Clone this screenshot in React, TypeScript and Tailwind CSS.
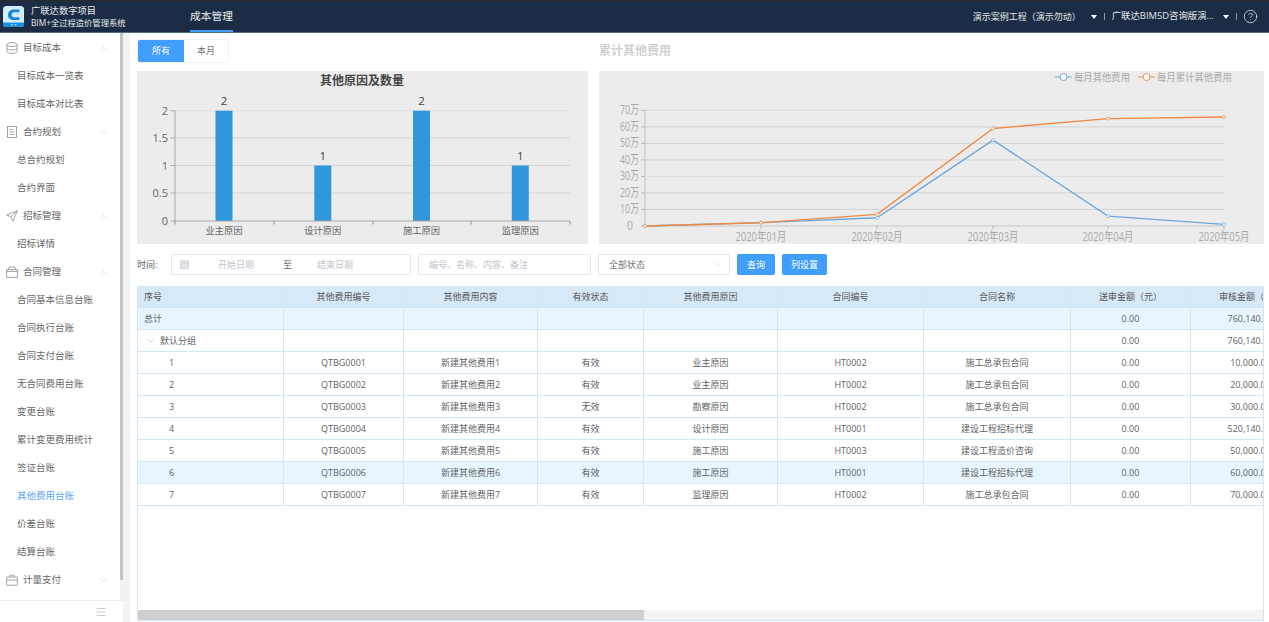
import { ChevronDown, ChevronUp, CircleHelp, Menu } from 'lucide-react';

const FONT = '"Open Sans","Noto Sans CJK SC","Noto Sans",sans-serif';

type NavItem = { label: string; icon?: string; open?: boolean; active?: boolean };

const navItems: NavItem[] = [
  { label: '目标成本', icon: 'db', open: true },
  { label: '目标成本一览表' },
  { label: '目标成本对比表' },
  { label: '合约规划', icon: 'doc', open: true },
  { label: '总合约规划' },
  { label: '合约界面' },
  { label: '招标管理', icon: 'send', open: true },
  { label: '招标详情' },
  { label: '合同管理', icon: 'box', open: true },
  { label: '合同基本信息台账' },
  { label: '合同执行台账' },
  { label: '合同支付台账' },
  { label: '无合同费用台账' },
  { label: '变更台账' },
  { label: '累计变更费用统计' },
  { label: '签证台账' },
  { label: '其他费用台账', active: true },
  { label: '价差台账' },
  { label: '结算台账' },
  { label: '计量支付', icon: 'case', open: false },
];

const columns = [
  { title: '序号', width: 146 },
  { title: '其他费用编号', width: 120 },
  { title: '其他费用内容', width: 134 },
  { title: '有效状态', width: 106 },
  { title: '其他费用原因', width: 134 },
  { title: '合同编号', width: 146 },
  { title: '合同名称', width: 147 },
  { title: '送审金额（元）', width: 120 },
  { title: '审核金额（元）', width: 120 },
];

const rows = [
  ['1', 'QTBG0001', '新建其他费用1', '有效', '业主原因', 'HT0002', '施工总承包合同', '0.00', '10,000.00'],
  ['2', 'QTBG0002', '新建其他费用2', '有效', '业主原因', 'HT0002', '施工总承包合同', '0.00', '20,000.00'],
  ['3', 'QTBG0003', '新建其他费用3', '无效', '勘察原因', 'HT0002', '施工总承包合同', '0.00', '30,000.00'],
  ['4', 'QTBG0004', '新建其他费用4', '有效', '设计原因', 'HT0001', '建设工程招标代理', '0.00', '520,140.00'],
  ['5', 'QTBG0005', '新建其他费用5', '有效', '施工原因', 'HT0003', '建设工程造价咨询', '0.00', '50,000.00'],
  ['6', 'QTBG0006', '新建其他费用6', '有效', '施工原因', 'HT0001', '建设工程招标代理', '0.00', '60,000.00'],
  ['7', 'QTBG0007', '新建其他费用7', '有效', '监理原因', 'HT0002', '施工总承包合同', '0.00', '70,000.00'],
];

function NavIcon({ name }: { name: string }) {
  const common = { width: 12, height: 12, viewBox: '0 0 12 12', fill: 'none', stroke: '#9a9a9a', strokeWidth: 0.9 };
  if (name === 'db') {
    return (
      <svg {...common}>
        <ellipse cx="6" cy="2.6" rx="5" ry="2" />
        <path d="M1 2.6v6.8c0 1.1 2.2 2 5 2s5-.9 5-2V2.6M1 6c0 1.1 2.2 2 5 2s5-.9 5-2" />
      </svg>
    );
  }
  if (name === 'doc') {
    return (
      <svg {...common}>
        <rect x="1.5" y="0.5" width="9" height="11" />
        <path d="M3.5 3.5h3M3.5 6h5M3.5 8.5h5" />
      </svg>
    );
  }
  if (name === 'send') {
    return (
      <svg {...common}>
        <path d="M11.3.7.7 5l4.2 1.9 2 4.4zM4.9 6.9 11.3.7" />
      </svg>
    );
  }
  if (name === 'box') {
    return (
      <svg {...common}>
        <rect x="0.6" y="3.6" width="10.8" height="7.8" />
        <path d="M2.4 3.6 3 1h6l.6 2.6M.6 5.4h10.8" />
      </svg>
    );
  }
  return (
    <svg {...common}>
      <rect x="0.6" y="3" width="10.8" height="8.2" rx="0.5" />
      <path d="M4 3V1.2h4V3M.6 6h10.8" />
    </svg>
  );
}

function Sidebar() {
  return (
    <aside className="flex h-full w-[123px] shrink-0 flex-col bg-white">
      <div className="flex min-h-0 flex-1">
        <div className="w-[120px] overflow-hidden pt-px">
          {navItems.map(item =>
            item.icon ? (
              <div key={item.label} className="flex h-[28px] items-center pl-[6px] pr-[11px] text-[#666]">
                <NavIcon name={item.icon} />
                <span className="ml-[5px] flex-1 text-[9.5px]">{item.label}</span>
                {item.open ? (
                  <ChevronUp size={11} strokeWidth={1} color="#bbb" />
                ) : (
                  <ChevronDown size={11} strokeWidth={1} color="#bbb" />
                )}
              </div>
            ) : (
              <div
                key={item.label}
                className={`flex h-[28px] items-center pl-[17px] text-[9.5px] ${item.active ? 'text-[#5ba4f7]' : 'text-[#666]'}`}
              >
                {item.label}
              </div>
            ),
          )}
        </div>
        <div className="w-[3px] bg-[#f1f1f1]">
          <div className="h-[547px] bg-[#c4c4c4]" />
        </div>
      </div>
      <div className="flex h-[22px] items-center justify-end border-t border-[#eeeeee] pr-[16px]">
        <Menu size={12} strokeWidth={1} color="#999" />
      </div>
    </aside>
  );
}

function Header() {
  return (
    <header className="flex h-[33px] shrink-0 items-center border-t border-[#2b2b2b] border-b border-b-[#5c6b7e] bg-[#1b2c44] text-white">
      <svg width="21" height="21" viewBox="0 0 21 21" className="ml-[3px]">
        <rect width="21" height="21" rx="3.500" fill="#d3effb" />
        <path d="M0 16.500h21V18a3 3 0 0 1-3 3H3a3 3 0 0 1-3-3z" fill="#1a8fe0" />
        <path d="M16.500 3.500H10.500C7.500 3.500 5 5.800 5 9s2.500 5 5.500 5h6v-2.800h-5.500c-1.400 0-2.300-.9-2.300-2.200s.9-2.700 2.300-2.700h5.500z" fill="#1a86d8" />
        <path d="M8 18.800h2M11.500 18.800h2" stroke="#cdeaf8" strokeWidth="1" />
      </svg>
      <div className="ml-[7px] w-[159px] leading-[12px]">
        <div className="text-[9.3px] text-[#e8ebef]">广联达数字项目</div>
        <div className="text-[8.3px] text-[#e8ebef]">BIM+全过程造价管理系统</div>
      </div>
      <div className="flex h-full w-[43px] items-center justify-center border-b-2 border-[#409eff] pt-[2px] text-[10.7px] text-[#eef1f4]">
        成本管理
      </div>
      <div className="ml-auto flex items-center pr-[11px] text-[9.4px] text-[#e4e7eb]">
        <span className="text-[9px]">演示案例工程（演示勿动）</span>
        <span className="ml-[10px] h-0 w-0 border-x-[3px] border-t-[4px] border-x-transparent border-t-white" />
        <span className="ml-[7px] h-[7px] w-px bg-[#8a96a5]" />
        <span className="ml-[7px]">广联达BIM5D咨询版演...</span>
        <span className="ml-[9px] h-0 w-0 border-x-[3px] border-t-[4px] border-x-transparent border-t-white" />
        <span className="ml-[7px] h-[7px] w-px bg-[#8a96a5]" />
        <CircleHelp size={15} strokeWidth={1.2} className="ml-[6px]" />
      </div>
    </header>
  );
}

function BarChart() {
  const gridY = [110.7, 138, 165.5, 193, 221];
  const labels = ['2', '1.5', '1', '0.5', '0'];
  const ticks = [175, 274, 373, 471, 570];
  const bars = [
    { x: 215.5, value: 2, name: '业主原因' },
    { x: 314.3, value: 1, name: '设计原因' },
    { x: 413, value: 2, name: '施工原因' },
    { x: 511.800, value: 1, name: '监理原因' },
  ];
  return (
    <svg width="451" height="173" viewBox="137 71 451 173" className="bg-[#ececec]" style={{ fontFamily: FONT }}>
      <text x="362" y="85" textAnchor="middle" fontSize="12" fontWeight="700" fill="#444">其他原因及数量</text>
      {gridY.map((y, i) => (
        <g key={y}>
          {i < 4 && <line x1="175" x2="570" y1={y} y2={y} stroke={i === 0 ? '#dadada' : '#cfcfcf'} strokeWidth="0.8" />}
          <line x1="170.500" x2="175" y1={y} y2={y} stroke="#999" strokeWidth="0.8" />
          <text x="168" y={y + 4} textAnchor="end" fontSize="11" fill="#666">{labels[i]}</text>
        </g>
      ))}
      <line x1="175" x2="175" y1="110.700" y2="221" stroke="#a8a8a8" strokeWidth="1" />
      {bars.map(bar => {
        const top = bar.value === 2 ? 110.7 : 165.5;
        return (
          <g key={bar.name}>
            <rect x={bar.x} y={top} width="17" height={221 - top} fill="#3097dc" />
            <text x={bar.x + 8.500} y={top - 5.500} textAnchor="middle" fontSize="11.500" fill="#444">{bar.value}</text>
            <text x={bar.x + 8.500} y="233.500" textAnchor="middle" fontSize="9.300" fill="#666">{bar.name}</text>
          </g>
        );
      })}
      <line x1="175" x2="570" y1="221" y2="221" stroke="#a8a8a8" strokeWidth="1.200" />
      {ticks.map(x => (
        <line key={x} x1={x} x2={x} y1="221" y2="224.500" stroke="#777" strokeWidth="0.8" />
      ))}
    </svg>
  );
}

function LineChart() {
  const xs = [645, 761, 877, 993, 1108, 1224];
  const toY = (v: number) => 226 - v * 1.652;
  const monthly = [0, 2, 5, 52, 6, 1];
  const total = [0, 2, 7, 59, 65, 66];
  const toPoints = (data: number[]) => data.map((v, i) => `${xs[i]},${toY(v)}`).join(' ');
  const yLabels = ['0', '10万', '20万', '30万', '40万', '50万', '60万', '70万'];
  const months = ['2020年01月', '2020年02月', '2020年03月', '2020年04月', '2020年05月'];
  return (
    <svg width="665" height="173" viewBox="599 71 665 173" className="bg-[#ececec]" style={{ fontFamily: FONT }}>
      <line x1="1055" x2="1072" y1="77" y2="77" stroke="#6ea6dc" strokeWidth="1" />
      <circle cx="1063.500" cy="77" r="3.500" fill="#fff" stroke="#6ea6dc" />
      <text x="1074" y="80.500" fontSize="10" fill="#aaa" textLength="56" lengthAdjust="spacingAndGlyphs">每月其他费用</text>
      <line x1="1138" x2="1155" y1="77" y2="77" stroke="#f0924f" strokeWidth="1" />
      <circle cx="1146.500" cy="77" r="3.500" fill="#fff" stroke="#f0924f" />
      <text x="1157" y="80.500" fontSize="10" fill="#aaa" textLength="75" lengthAdjust="spacingAndGlyphs">每月累计其他费用</text>
      {yLabels.map((label, i) => {
        const y = 226 - i * 16.52;
        return (
          <g key={label}>
            {i > 0 && <line x1="645" x2="1224" y1={y} y2={y} stroke={i === 7 || i === 3 ? '#dcdcdc' : '#cfcfcf'} strokeWidth="0.9" />}
            <line x1="641" x2="645" y1={y} y2={y} stroke="#aaa" strokeWidth="0.8" />
            <text
              x={i === 0 ? 633 : 639}
              y={y + 4}
              textAnchor="end"
              fontSize="12"
              fill="#aaa"
              textLength={i === 0 ? 6 : 19}
              lengthAdjust="spacingAndGlyphs"
            >
              {label}
            </text>
          </g>
        );
      })}
      <line x1="645" x2="645" y1="110" y2="226" stroke="#bbb" strokeWidth="0.9" />
      <line x1="645" x2="1224" y1="226" y2="226" stroke="#c8c8c8" strokeWidth="1.200" />
      {xs.map(x => (
        <line key={x} x1={x} x2={x} y1="226" y2="229" stroke="#aaa" strokeWidth="0.8" />
      ))}
      {months.map((label, i) => (
        <text key={label} x={xs[i + 1] - 25.500} y="240.500" fontSize="12" fill="#aaa" textLength="51" lengthAdjust="spacingAndGlyphs">
          {label}
        </text>
      ))}
      <polyline points={toPoints(monthly)} fill="none" stroke="#6ea6dc" strokeWidth="1.300" />
      <polyline points={toPoints(total)} fill="none" stroke="#ef8a45" strokeWidth="1.400" />
      {monthly.map((v, i) => (
        <circle key={i} cx={xs[i]} cy={toY(v)} r="1.500" fill="#fff" stroke="#6ea6dc" strokeWidth="0.7" />
      ))}
      {total.map((v, i) => (
        <circle key={i} cx={xs[i]} cy={toY(v)} r="1.500" fill="#fff" stroke="#ef8a45" strokeWidth="0.7" />
      ))}
    </svg>
  );
}

function Filters() {
  return (
    <div className="flex h-[21px] shrink-0 items-center text-[9px] text-[#c0c4cc]">
      <span className="w-[34px] text-[#606266]">时间:</span>
      <div className="flex h-full w-[240px] items-center rounded-[2px] border border-[#e4e7ed] pl-[8px]">
        <svg width="9" height="9" viewBox="0 0 9 9" fill="#e3e6ec" stroke="#c6cad2" strokeWidth="0.7">
          <rect x="0.5" y="0.8" width="8" height="7.700" />
          <path d="M.5 3h8" />
        </svg>
        <span className="ml-[29px] w-[65px]">开始日期</span>
        <span className="text-[#606266]">至</span>
        <span className="ml-[25px]">结束日期</span>
      </div>
      <div className="ml-[7px] flex h-full w-[173px] items-center rounded-[2px] border border-[#e4e7ed] pl-[10px]">
        编号、名称、内容、备注
      </div>
      <div className="ml-[7px] flex h-full w-[132px] items-center justify-between rounded-[2px] border border-[#e4e7ed] pl-[10px] pr-[6px] text-[#777]">
        全部状态
        <ChevronDown size={11} strokeWidth={1} color="#c0c4cc" />
      </div>
      <button className="ml-[7px] h-full w-[38px] rounded-[2px] bg-[#409eff] text-[9px] text-white">查询</button>
      <button className="ml-[7px] h-full w-[45px] rounded-[2px] bg-[#409eff] text-[9px] text-white">列设置</button>
    </div>
  );
}

function DataTable() {
  const cell = 'h-[22px] border-r border-b border-[#d3e6f5] p-0 text-center font-normal';
  return (
    <div className="relative mt-[11px] min-h-0 flex-1 overflow-hidden border-x border-b border-[#d3e6f5] text-[9px] text-[#606266]">
      <table className="w-[1173px] table-fixed border-separate border-spacing-0">
        <colgroup>
          {columns.map(col => (
            <col key={col.title} style={{ width: col.width }} />
          ))}
        </colgroup>
        <thead>
          <tr className="bg-[#d6e9f8] text-[#555]">
            {columns.map((col, i) => (
              <th key={col.title} className={`${cell} border-t font-medium ${i === 0 ? 'pl-[6px] text-left' : ''}`}>
                {col.title}
              </th>
            ))}
          </tr>
        </thead>
        <tbody>
          <tr className="bg-[#e8f5fe]">
            <td className={`${cell} pl-[6px] text-left`}>总计</td>
            {columns.slice(1, 7).map(col => (
              <td key={col.title} className={cell} />
            ))}
            <td className={cell}>0.00</td>
            <td className={cell}>760,140.00</td>
          </tr>
          <tr>
            <td className={`${cell} text-left`}>
              <div className="flex items-center pl-[8px]">
                <ChevronDown size={10} strokeWidth={1} color="#888" />
                <span className="ml-[4px]">默认分组</span>
              </div>
            </td>
            {columns.slice(1, 7).map(col => (
              <td key={col.title} className={cell} />
            ))}
            <td className={cell}>0.00</td>
            <td className={cell}>760,140.00</td>
          </tr>
          {rows.map(row => (
            <tr key={row[0]} className={row[0] === '6' ? 'bg-[#e8f5fe]' : ''}>
              {row.map((value, i) => (
                <td key={i} className={`${cell} ${i === 0 ? 'pl-[31px] text-left' : ''}`}>
                  {value}
                </td>
              ))}
            </tr>
          ))}
        </tbody>
      </table>
      <div className="absolute inset-x-0 bottom-0 h-[10px] bg-[#f3f3f3]">
        <div className="h-full w-[506px] bg-[#cfcfcf]" />
      </div>
    </div>
  );
}

export default function App() {
  return (
    <div className="flex h-[622px] w-[1269px] flex-col overflow-hidden bg-white" style={{ fontFamily: FONT }}>
      <Header />
      <div className="flex min-h-0 flex-1">
        <Sidebar />
        <div className="w-[7px] shrink-0 bg-[#f0f2f5]" />
        <main className="flex min-w-0 flex-1 flex-col pb-px pl-[7px] pr-[5px] pt-[6px]">
          <div className="flex h-[24px] shrink-0">
            <div className="flex w-[462px]">
              <div className="flex h-[24px] w-[92px] overflow-hidden rounded-[3px] border border-[#eef0f3] text-[9px]">
                <div className="flex w-[46px] items-center justify-center bg-[#409eff] text-white">所有</div>
                <div className="flex flex-1 items-center justify-center text-[#777]">本月</div>
              </div>
            </div>
            <div className="pt-[4px] text-[12px] font-bold leading-[16px] text-[#d0d0d0]">累计其他费用</div>
          </div>
          <div className="mt-[8px] flex h-[173px] shrink-0 gap-[11px]">
            <BarChart />
            <LineChart />
          </div>
          <div className="mt-[10px] flex min-h-0 flex-1 flex-col">
            <Filters />
            <DataTable />
          </div>
        </main>
      </div>
    </div>
  );
}
